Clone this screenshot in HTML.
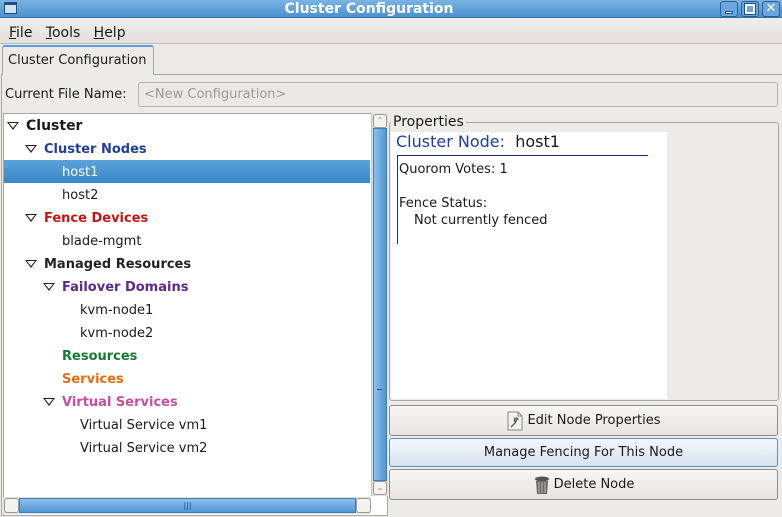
<!DOCTYPE html>
<html><head><meta charset="utf-8"><style>
*{margin:0;padding:0;box-sizing:border-box}
body{width:782px;height:517px;overflow:hidden;background:#edebe9;font-family:"DejaVu Sans","Liberation Sans",sans-serif;font-size:13px;color:#1a1a1a;position:relative}
.a{position:absolute;white-space:nowrap}
.row{position:absolute;left:4px;width:366px;height:23px;line-height:23px}
.tri{position:absolute;top:7px;width:0;height:0;border-left:6px solid transparent;border-right:6px solid transparent;border-top:8px solid #222}
.tri:after{content:"";position:absolute;left:-4px;top:-7px;border-left:4px solid transparent;border-right:4px solid transparent;border-top:5px solid #fff}
.b{font-weight:bold}
.btn{position:absolute;left:389px;width:389px;border:1px solid #8e8a85;border-radius:3px;background:linear-gradient(#f8f7f6,#e6e3e0);text-align:center;line-height:28px}
</style></head><body>
<div class="a" style="left:0;top:0;width:782px;height:18px;background:linear-gradient(#7ab4e2,#4b91cf);border-bottom:1px solid #2f6ea8"></div>
<div class="a" style="left:4px;top:2px;width:13px;height:12px;border:1px solid #1f4f80;background:#cfe0ef;border-top-width:3px"></div>
<div class="a b" style="left:0;width:738px;top:1px;text-align:center;color:#fff;font-size:14px;line-height:17px">Cluster Configuration</div>
<div class="a" style="left:720px;top:1px;width:18px;height:16px;border:1px solid #2a5f93;border-radius:3px;background:#6aa7dc"><div class="a" style="left:4px;top:9px;width:8px;height:3px;background:#fff;border:1px solid #1f4f80"></div></div>
<div class="a" style="left:741px;top:1px;width:18px;height:16px;border:1px solid #2a5f93;border-radius:3px;background:#6aa7dc"><div class="a" style="left:3px;top:2px;width:10px;height:10px;border:2px solid #fff;outline:1px solid #1f4f80"></div></div>
<div class="a" style="left:762px;top:1px;width:18px;height:16px;border:1px solid #2a5f93;border-radius:3px;background:#6aa7dc;color:#fff;font-weight:bold;font-size:13px;line-height:14px;text-align:center">✕</div>
<div class="a" style="left:0;top:18px;width:782px;height:26px;background:linear-gradient(#efeeec,#e3e0dd);border-bottom:1px solid #bdb9b5"></div>
<div class="a" style="left:9px;top:24px;font-size:14px;line-height:18px"><u>F</u>ile&nbsp;&nbsp; <u>T</u>ools&nbsp;&nbsp; <u>H</u>elp</div>
<div class="a" style="left:1px;top:74px;width:781px;height:443px;border:1px solid #a9a5a0;border-bottom:none;border-right:none"></div>
<div class="a" style="left:2px;top:45px;width:152px;height:30px;border:1px solid #a9a5a0;border-bottom:none;border-top:2px solid #5c9bd5;border-radius:3px 3px 0 0;background:#edebe9"></div>
<div class="a" style="left:8px;top:52px;line-height:18px;font-size:13px">Cluster Configuration</div>
<div class="a" style="left:5px;top:86px;line-height:18px">Current File Name:</div>
<div class="a" style="left:138px;top:82px;width:640px;height:25px;border:1px solid #b6b2ad;border-radius:3px;background:#ebe9e7;color:#999;line-height:24px;padding-left:5px">&lt;New Configuration&gt;</div>
<div class="a" style="left:3px;top:113px;width:385px;height:403px;border:1px solid #a9a5a0;background:#fff"></div>
<div class="row" style="top:160px;background:linear-gradient(#5aa3da,#3a87c6)"></div>
<div class="row" style="top:115px"><span class="tri" style="left:3px"></span><span class="a b" style="left:22px;font-size:14px">Cluster</span></div>
<div class="row" style="top:138px"><span class="tri" style="left:21px"></span><span class="a b" style="left:40px;color:#1e3f9a">Cluster Nodes</span></div>
<div class="row" style="top:161px"><span class="a" style="left:58px;color:#fff">host1</span></div>
<div class="row" style="top:184px"><span class="a" style="left:58px">host2</span></div>
<div class="row" style="top:207px"><span class="tri" style="left:21px"></span><span class="a b" style="left:40px;color:#c8150f">Fence Devices</span></div>
<div class="row" style="top:230px"><span class="a" style="left:58px">blade-mgmt</span></div>
<div class="row" style="top:253px"><span class="tri" style="left:21px"></span><span class="a b" style="left:40px;color:#222">Managed Resources</span></div>
<div class="row" style="top:276px"><span class="tri" style="left:39px"></span><span class="a b" style="left:58px;color:#5b2a8e">Failover Domains</span></div>
<div class="row" style="top:299px"><span class="a" style="left:76px">kvm-node1</span></div>
<div class="row" style="top:322px"><span class="a" style="left:76px">kvm-node2</span></div>
<div class="row" style="top:345px"><span class="a b" style="left:58px;color:#137a32">Resources</span></div>
<div class="row" style="top:368px"><span class="a b" style="left:58px;color:#e86b10">Services</span></div>
<div class="row" style="top:391px"><span class="tri" style="left:39px"></span><span class="a b" style="left:58px;color:#c54f9e">Virtual Services</span></div>
<div class="row" style="top:414px"><span class="a" style="left:76px">Virtual Service vm1</span></div>
<div class="row" style="top:437px"><span class="a" style="left:76px">Virtual Service vm2</span></div>
<div class="a" style="left:371px;top:113px;width:17px;height:383px;background:#e3e0dd;border-left:1px solid #c9c5c1"></div>
<div class="a" style="left:373px;top:114px;width:14px;height:14px;border:1px solid #9b9791;border-radius:3px;background:#f4f3f2;font-size:8px;text-align:center;line-height:12px;color:#888">⌃</div>
<div class="a" style="left:373px;top:128px;width:14px;height:353px;background:linear-gradient(90deg,#8ec0ea,#4d97d3);border:1px solid #3e7fb8"></div>
<div class="a" style="left:377px;top:389px;width:5px;height:1px;background:#1d4f80"></div>
<div class="a" style="left:373px;top:481px;width:14px;height:14px;border:1px solid #9b9791;border-radius:3px;background:#f4f3f2;font-size:8px;text-align:center;line-height:12px;color:#888">⌄</div>
<div class="a" style="left:3px;top:497px;width:368px;height:17px;background:#e3e0dd"></div>
<div class="a" style="left:4px;top:498px;width:15px;height:15px;border:1px solid #9b9791;border-radius:3px;background:#f4f3f2"></div>
<div class="a" style="left:19px;top:498px;width:337px;height:15px;background:linear-gradient(#8ec0ea,#4d97d3);border:1px solid #3e7fb8;text-align:center;font-size:8px;line-height:13px;color:#1d4f80">|||</div>
<div class="a" style="left:356px;top:498px;width:15px;height:15px;border:1px solid #9b9791;border-radius:3px;background:#f4f3f2"></div>
<div class="a" style="left:389px;top:122px;width:390px;height:279px;border:1px solid #a9a5a0;border-radius:3px"></div>
<div class="a" style="left:391px;top:113px;background:#edebe9;padding:0 2px;line-height:18px;font-size:14px">Properties</div>
<div class="a" style="left:391px;top:132px;width:276px;height:267px;background:#fff"></div>
<div class="a" style="left:396px;top:132px;font-size:16px;line-height:20px"><span style="color:#1e3f9a">Cluster Node:</span>&nbsp; host1</div>
<div class="a" style="left:397px;top:155px;width:251px;height:1px;background:#1e2f7a"></div>
<div class="a" style="left:397px;top:155px;width:1px;height:89px;background:#1e2f7a"></div>
<div class="a" style="left:399px;top:161px;line-height:17px">Quorom Votes: 1</div>
<div class="a" style="left:399px;top:195px;line-height:17px">Fence Status:</div>
<div class="a" style="left:414px;top:212px;line-height:17px">Not currently fenced</div>
<div class="btn" style="top:405px;height:31px;line-height:29px"><svg width="18" height="20" viewBox="0 0 18 20" style="vertical-align:middle;margin-right:3px"><path d="M2 1h10l4 4v14H2z" fill="#f2f2f2" stroke="#888"/><path d="M12 1v4h4" fill="none" stroke="#888"/><path d="M5 16l5-5m0 0a2 2 0 1 1 2 -3l-2 1v1h1" fill="none" stroke="#555" stroke-width="1.3"/></svg>Edit Node Properties</div>
<div class="btn" style="top:438px;height:29px;border-color:#5b8fc0;background:linear-gradient(#f3f7fb,#d6e2ee);line-height:28px">Manage Fencing For This Node</div>
<div class="btn" style="top:469px;height:31px;line-height:29px"><svg width="18" height="20" viewBox="0 0 18 20" style="vertical-align:middle;margin-right:3px"><ellipse cx="9" cy="4" rx="7" ry="2.5" fill="#555"/><path d="M3 6h12l-1 13H4z" fill="#6a6a6a"/><path d="M6 7v11M9 7v11M12 7v11" stroke="#bbb"/></svg>Delete Node</div>
</body></html>
